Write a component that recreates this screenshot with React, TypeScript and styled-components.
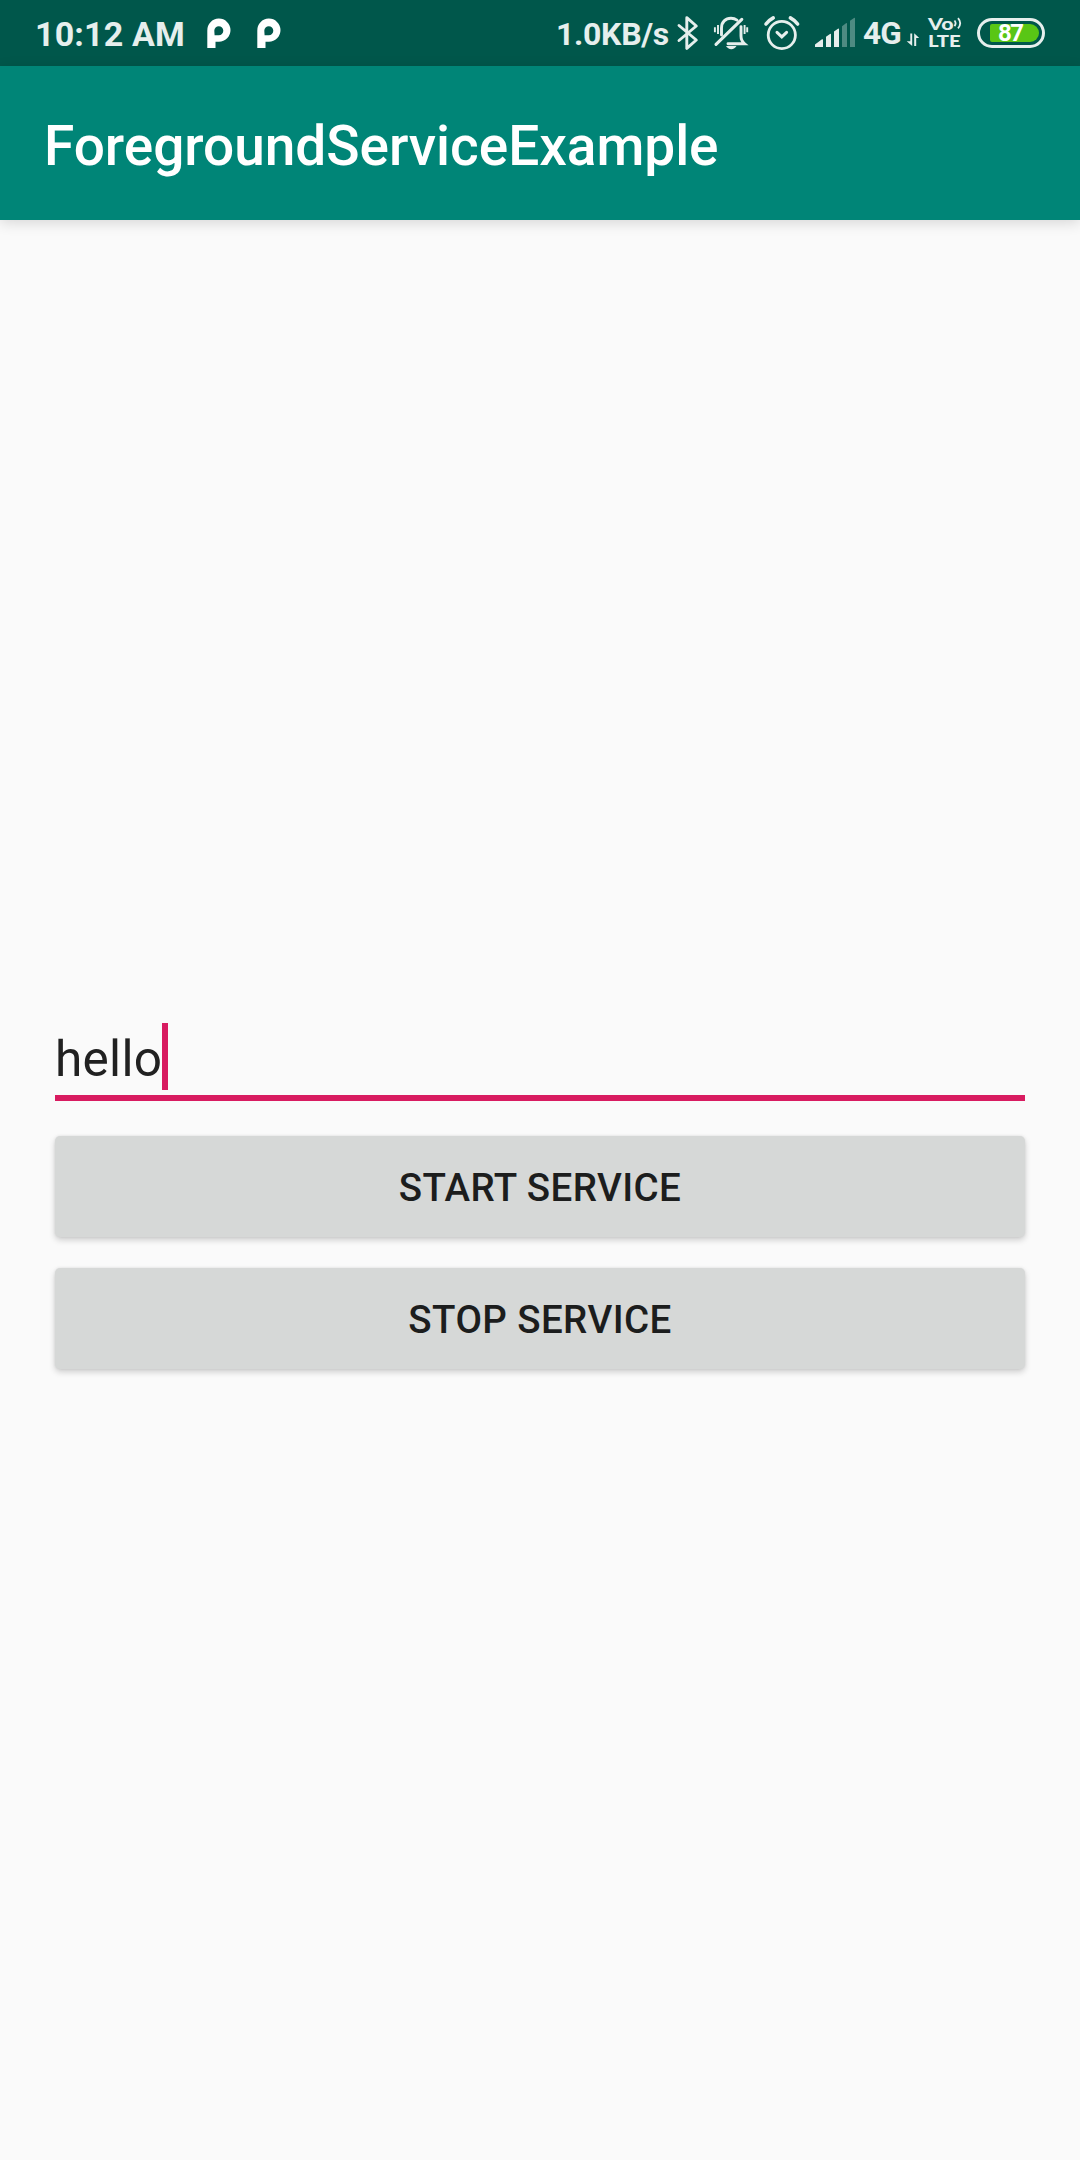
import React, { useState } from "react";
import styled, { createGlobalStyle } from "styled-components";

const GlobalStyle = createGlobalStyle`
  * { box-sizing: border-box; }
  body {
    margin: 0;
    background: #fafafa;
    font-family: Roboto, "Liberation Sans", sans-serif;
  }
`;

const INK = "#e6efed";

const Screen = styled.div`
  display: flex;
  flex-direction: column;
  width: 1080px;
  height: 2160px;
  background: #fafafa;
  overflow: hidden;
`;

const StatusBar = styled.div`
  display: flex;
  flex: none;
  height: 66px;
  padding-left: 35px;
  padding-right: 35px;
  background: #00574b;
  color: ${INK};
`;

const StatusGroup = styled.div<{ $end?: boolean }>`
  display: flex;
  height: 66px;
  margin-left: ${(p) => (p.$end ? "auto" : "0")};
`;

const StatusText = styled.span<{ $size: number; $line: number; $width: number; $spacing?: number }>`
  width: ${(p) => p.$width}px;
  font-size: ${(p) => p.$size}px;
  line-height: ${(p) => p.$line}px;
  letter-spacing: ${(p) => p.$spacing ?? 0}px;
  font-weight: 700;
  white-space: nowrap;
`;

const Glyph = styled.svg`
  display: block;
  flex: none;
  height: 66px;
`;

const VolteBadge = styled.div`
  display: flex;
  flex-direction: column;
  width: 51px;
  padding: 15px 0 0 2px;
  font-family: Lato, sans-serif;
  font-weight: 900;
  font-size: 17.5px;
  line-height: 17px;
`;

const VolteLine = styled.div`
  display: flex;
`;

const WideText = styled.span<{ $width: number; $stretch: number }>`
  width: ${(p) => p.$width}px;
  transform: scaleX(${(p) => p.$stretch});
  transform-origin: left center;
`;

const Waves = styled.svg`
  display: block;
  width: 9px;
  height: 17px;
`;

const Battery = styled.div`
  display: flex;
  width: 68px;
  height: 30px;
  margin-top: 18px;
  padding: 3px;
  border: 3px solid ${INK};
  border-radius: 15px;
`;

const BatteryFill = styled.div`
  width: 49px;
  height: 18px;
  margin-left: auto;
  padding-left: 8px;
  border-radius: 2px 9px 9px 2px;
  background: #59c615;
  color: #fff;
  font-size: 24px;
  font-weight: 700;
  line-height: 19px;
  letter-spacing: -1.4px;
`;

const AppBar = styled.header`
  display: flex;
  flex: none;
  align-items: center;
  height: 154px;
  padding: 6px 44px 0;
  background: #008577;
  box-shadow: 0 3px 13px rgba(0, 0, 0, 0.14);
`;

const Title = styled.h1`
  margin: 0;
  color: #fff;
  font-size: 55px;
  font-weight: 500;
  line-height: 64px;
  letter-spacing: -0.04px;
`;

const Form = styled.main`
  display: flex;
  flex: 1;
  flex-direction: column;
  padding: 803px 55px 0;
`;

const Field = styled.div`
  display: flex;
  height: 78px;
  margin-bottom: 35px;
  border-bottom: 6px solid #d81b60;
`;

const FieldText = styled.span`
  color: #212121;
  font-size: 49.5px;
  line-height: 72px;
  letter-spacing: 0.3px;
`;

const Caret = styled.span`
  width: 6px;
  height: 67px;
  background: #d81b60;
`;

const ActionButton = styled.button`
  display: block;
  flex: none;
  width: 970px;
  height: 101px;
  margin: 0 0 31px;
  padding: 2px 0 0;
  border: 0;
  border-radius: 5px;
  background: #d6d8d7;
  box-shadow: 0 3px 6px rgba(0, 0, 0, 0.18), 0 0 3px rgba(0, 0, 0, 0.08);
  color: #1c1d1d;
  font-family: inherit;
  font-size: 38.5px;
  font-weight: 500;
  line-height: 45px;
  letter-spacing: 0.4px;
  text-transform: uppercase;
`;

const PeopleMark = () => (
  <Glyph width="50" viewBox="194 0 50 66">
    <path fill="#fff" fillRule="evenodd" d="M207.3 48V30.5a11.6 11.6 0 1 1 11.6 11.3h-3.4V48ZM214.6 35.2h4.2a4.5 4.5 0 1 0-4.5-4.5Z" />
  </Glyph>
);

const BluetoothIcon = () => (
  <Glyph width="32" viewBox="673 0 32 66" fill="none" stroke={INK} strokeWidth="2.9" strokeLinejoin="round" strokeLinecap="round">
    <path d="M679 25.5 696.3 40 686.8 48.4V17.7L696.3 26 679 40.5" />
  </Glyph>
);

const MutedBellIcon = () => (
  <Glyph width="50" viewBox="705 0 50 66" fill="none" stroke={INK} strokeWidth="2.9" strokeLinecap="round">
    <path d="M716 44.4 741.8 19.4" strokeWidth="3.1" />
    <path d="M721.5 35V28c0-6 4-9.7 9.5-9.7 2.4 0 4.3.6 6 1.8M741 26.600V36c0 3 1 5.600 3.600 7.800H728" />
    <path d="M718 25v9M744.600 25v9M714.900 27.300v5M747.200 27.300v5" strokeWidth="1.900" strokeLinecap="butt" />
    <path fill={INK} stroke="none" d="M726 46h10.500c-1 2-3 3.200-5.200 3.200s-4.200-1.200-5.300-3.200Z" />
  </Glyph>
);

const AlarmIcon = () => (
  <Glyph width="54" viewBox="755 0 54 66" fill="none" stroke={INK} strokeWidth="2.8" strokeLinecap="round">
    <circle cx="781.800" cy="35" r="13.600" />
    <path d="M777 32.400 781.800 36.900 786.600 32.400" strokeWidth="3" />
    <path d="M766 24q3-4 7.200-6.200M797.600 24q-3-4-7.200-6.200" strokeWidth="3.600" />
  </Glyph>
);

const SignalIcon = () => (
  <Glyph width="54" viewBox="809 0 54 66" fill={INK}>
    <path d="M815 47v-2.500l7-5.200q1-.5 1 .5V47ZM826 47V36.800l4-2.800q1-.5 1 .5V47ZM834 47V31.500l4-2.800q1-.5 1 .5V47Z" />
    <path fillOpacity="0.34" d="M842 47V26.200l4-3q1-.5 1 .5V47ZM850 47V20.800l4-2.800q1-.5 1 .5V47Z" />
  </Glyph>
);

const DataArrows = () => (
  <Glyph width="21" viewBox="905 0 21 66" fill={INK}>
    <path d="M910.300 33.500h1.900V46L906.700 41.300h3.600ZM914.200 46V33.200l5 4.800h-3V46Z" />
  </Glyph>
);

export default function App() {
  const [message] = useState("hello");
  return (
    <>
      <GlobalStyle />
      <Screen>
        <StatusBar>
          <StatusGroup>
            <StatusText $size={34} $line={69} $width={159} $spacing={0.15}>10:12 AM</StatusText>
            <PeopleMark />
            <PeopleMark />
          </StatusGroup>
          <StatusGroup $end>
            <StatusText $size={32} $line={68} $width={117} $spacing={-0.3}>1.0KB/s</StatusText>
            <BluetoothIcon />
            <MutedBellIcon />
            <AlarmIcon />
            <SignalIcon />
            <StatusText $size={31.5} $line={68} $width={42} $spacing={-0.7}>4G</StatusText>
            <DataArrows />
            <VolteBadge>
              <VolteLine>
                <WideText $width={25} $stretch={1.22}>Vo</WideText>
                <Waves viewBox="0 0 9 17" fill="none" stroke={INK} strokeWidth="1.8">
                  <path d="M1.500 5.500q2.200 2.800 0 5.600M5 3.200q4.400 5 0 10.200" />
                </Waves>
              </VolteLine>
              <VolteLine>
                <WideText $width={31} $stretch={1.16}>LTE</WideText>
              </VolteLine>
            </VolteBadge>
            <Battery>
              <BatteryFill>87</BatteryFill>
            </Battery>
          </StatusGroup>
        </StatusBar>
        <AppBar>
          <Title>ForegroundServiceExample</Title>
        </AppBar>
        <Form>
          <Field>
            <FieldText>{message}</FieldText>
            <Caret />
          </Field>
          <ActionButton>Start Service</ActionButton>
          <ActionButton>Stop Service</ActionButton>
        </Form>
      </Screen>
    </>
  );
}
